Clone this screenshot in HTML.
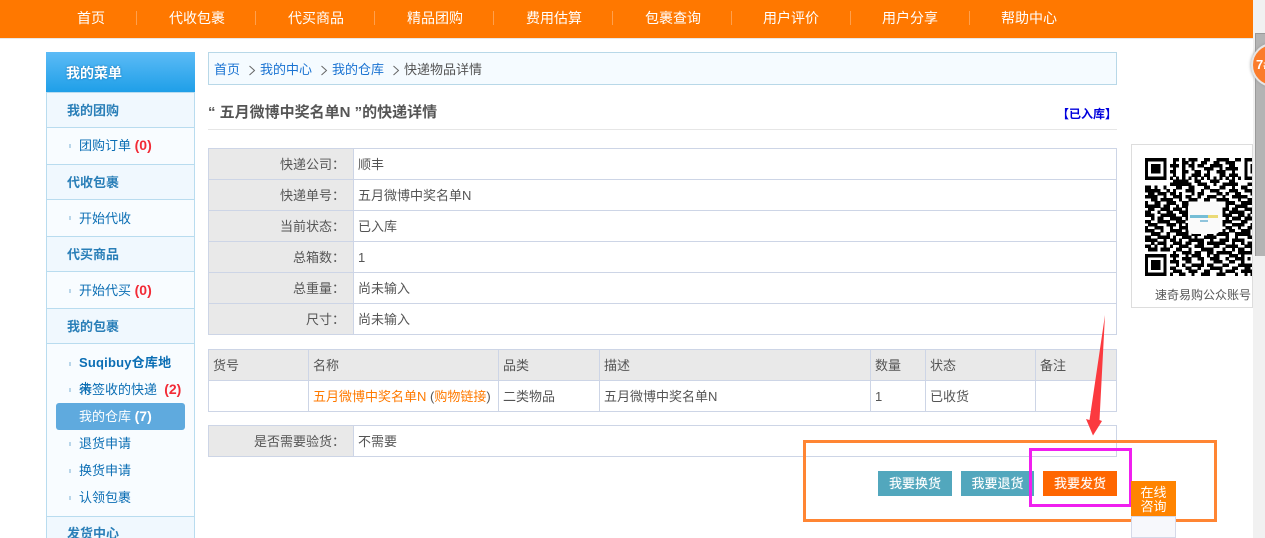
<!DOCTYPE html>
<html lang="zh-CN"><head><meta charset="utf-8"><title>快递物品详情</title>
<style>
*{box-sizing:border-box}
html,body{margin:0;padding:0;width:1265px;height:538px;overflow:hidden}
#w{position:absolute;left:0;top:0;width:1265px;height:538px;overflow:hidden;background:#fff;font:13px/16px "WenQuanYi Zen Hei Sharp","WenQuanYi Zen Hei","Liberation Sans","Noto Sans CJK SC",sans-serif;color:#555}
.a,.a *{white-space:nowrap}
.a{position:absolute}
a{text-decoration:none}
#hd{left:0;top:0;width:1253px;height:39px;background:#ff7800;border-bottom:1px solid #e8e8e8}
.n{position:absolute;top:10px;color:#fff;font-size:14px;line-height:16px}
.s{position:absolute;top:11px;width:1px;height:14px;background:#ffa04d}
#sb{left:46px;top:52px;width:149px;height:486px;overflow:hidden;background:#f8fcff;border-left:1px solid #b9dcef;border-right:1px solid #b9dcef}
#sh{left:46px;top:52px;width:149px;height:40px;background:linear-gradient(#5cbbf6,#1f9fe8);color:#fff;font-weight:bold;font-size:14px;line-height:42px;padding-left:20px;text-shadow:0 0 2px #0d6fb0}
.t{position:absolute;left:0;width:147px;height:36px;background:#f0f8fe;border-bottom:1px solid #b9dcef;border-top:1px solid #b9dcef;color:#2a7fb8;font-weight:bold;font-size:13px;line-height:36px;padding-left:20px}
.i{position:absolute;left:32px;color:#0b6eb4;font-size:13px;line-height:16px}
.i b{color:#f22b36;font-size:14px;font-family:"Liberation Sans",sans-serif}
.d{position:absolute;left:22px;width:2px;height:4px;background:#b9d6ea}
#cur{left:56px;top:403px;width:129px;height:27px;background:#5faade;border-radius:3px;color:#fff;line-height:27px;padding-left:23px}
#cur b{font-family:"Liberation Sans",sans-serif;font-size:14px}
#bc{left:208px;top:52px;width:909px;height:33px;background:#f5fbff;border:1px solid #b8d8e8}
#bc span{position:absolute;top:9px;color:#1a73d2}
#bc svg{position:absolute;top:12px;left:0}
#ti{left:208px;top:105px;font-weight:bold;font-size:15px;color:#555}
#st{right:148px;top:106px;color:#00d;font-weight:bold;font-size:12px}
#ln{left:208px;top:129px;width:909px;height:1px;background:#e6e6e6}
table{position:absolute;border-collapse:collapse;table-layout:fixed;left:208px;width:909px}
td{border:1px solid #cdd5e6;height:31px;padding:1px 4px 0;font-size:13px;color:#555;white-space:nowrap;line-height:16px}
td.l{background:#e9e9e9;text-align:right;padding-right:8px}
.h td{background:#e9e9e9}
.o{color:#ff7a00}
.b{position:absolute;top:471px;height:25px;color:#fff;text-align:center;line-height:25px;font-size:13px;background:#52a7bd;text-shadow:0 0 1px rgba(255,255,255,.5)}
</style></head><body><div id="w">
<div class="a" id="hd">
<span class="n" style="left:77px">首页</span><i class="s" style="left:136px"></i>
<span class="n" style="left:169px">代收包裹</span><i class="s" style="left:255px"></i>
<span class="n" style="left:288px">代买商品</span><i class="s" style="left:374px"></i>
<span class="n" style="left:407px">精品团购</span><i class="s" style="left:493px"></i>
<span class="n" style="left:526px">费用估算</span><i class="s" style="left:612px"></i>
<span class="n" style="left:645px">包裹查询</span><i class="s" style="left:731px"></i>
<span class="n" style="left:763px">用户评价</span><i class="s" style="left:850px"></i>
<span class="n" style="left:882px">用户分享</span><i class="s" style="left:969px"></i>
<span class="n" style="left:1001px">帮助中心</span>
</div>

<div class="a" id="sb">
<div class="t" style="top:40px;height:36px">我的团购</div>
<i class="d" style="top:92px"></i><span class="i" style="top:85px">团购订单 <b>(0)</b></span>
<div class="t" style="top:112px">代收包裹</div>
<i class="d" style="top:164px"></i><span class="i" style="top:159px">开始代收</span>
<div class="t" style="top:184px">代买商品</div>
<i class="d" style="top:237px"></i><span class="i" style="top:230px">开始代买 <b>(0)</b></span>
<div class="t" style="top:256px">我的包裹</div>
<i class="d" style="top:310px"></i><span class="i" style="top:303px;font-weight:bold;letter-spacing:.2px">Suqibuy仓库地</span>
<i class="d" style="top:336px"></i><span class="i" style="top:329px"><span style="position:absolute;left:0;top:0">未</span>待签收的快递 &nbsp;<b>(2)</b></span>
<i class="d" style="top:390px"></i><span class="i" style="top:384px">退货申请</span>
<i class="d" style="top:417px"></i><span class="i" style="top:411px">换货申请</span>
<i class="d" style="top:444px"></i><span class="i" style="top:438px">认领包裹</span>
<div class="t" style="top:464px;line-height:34px">发货中心</div>
</div>
<div class="a" id="sh">我的菜单</div>
<div class="a" id="cur">我的仓库 <b>(7)</b></div>

<div class="a" id="bc">
<svg width="907" height="12" fill="none" stroke="#666"><path d="M40.500 1l5 4.500-5 4.500M112.500 1l5 4.500-5 4.500M184.500 1l5 4.500-5 4.500"/></svg>
<span style="left:5px">首页</span><span style="left:51px">我的中心</span><span style="left:123px">我的仓库</span><span style="left:195px;color:#555">快递物品详情</span></div>
<div class="a" id="ti">“ 五月微博中奖名单N ”的快递详情</div>
<div class="a" id="st">【已入库】</div>
<div class="a" id="ln"></div>

<table style="top:148px">
<col style="width:145px"><col>
<tr><td class="l">快递公司：</td><td>顺丰</td></tr>
<tr><td class="l">快递单号：</td><td>五月微博中奖名单N</td></tr>
<tr><td class="l">当前状态：</td><td>已入库</td></tr>
<tr><td class="l">总箱数：</td><td>1</td></tr>
<tr><td class="l">总重量：</td><td>尚未输入</td></tr>
<tr><td class="l">尺寸：</td><td>尚未输入</td></tr>
</table>

<table style="top:349px">
<col style="width:100px"><col style="width:190px"><col style="width:101px"><col style="width:271px"><col style="width:55px"><col style="width:110px"><col>
<tr class="h"><td>货号</td><td>名称</td><td>品类</td><td>描述</td><td>数量</td><td>状态</td><td>备注</td></tr>
<tr><td></td><td><span class="o">五月微博中奖名单N</span> (<span class="o">购物链接</span>)</td><td>二类物品</td><td>五月微博中奖名单N</td><td>1</td><td>已收货</td><td></td></tr>
</table>

<table style="top:425px">
<col style="width:145px"><col>
<tr><td class="l">是否需要验货：</td><td>不需要</td></tr>
</table>

<div class="b" style="left:878px;width:74px">我要换货</div>
<div class="b" style="left:961px;width:73px">我要退货</div>
<div class="b" style="left:1043px;width:74px;background:#ff6600">我要发货</div>

<div class="a" style="left:803px;top:440px;width:414px;height:82px;border:3px solid #ff8533"></div>
<div class="a" style="left:1029px;top:448px;width:103px;height:59px;border:3px solid #f01fef"></div>

<svg class="a" style="left:1080px;top:310px" width="40" height="130"><path d="M25 5 L19.500 110 L22 111 L13 125.500 L6 109 L9.500 110 Z" fill="#fb3a3f"/></svg>

<div class="a" style="left:1131px;top:481px;width:45px;height:35px;background:#ff8400;color:#fff;font-size:13px;line-height:14px;text-align:center;padding-top:5px;white-space:normal">在线<br>咨询</div>
<div class="a" style="left:1131px;top:516px;width:45px;height:22px;border:1px solid #d5d9e8;background:#f7f8fc"></div>

<div class="a" style="left:1131px;top:144px;width:122px;height:164px;border:1px solid #ddd;overflow:hidden">
<svg style="position:absolute;left:13px;top:13px;filter:blur(.35px)" width="121" height="121" viewBox="0 0 39 39" shape-rendering="crispEdges"><path stroke="#000" stroke-width="1.150" fill="none" d="
M0 .5h7M9 .5h2M12 .5h1M14 .5h3M19 .5h2M23 .5h4M29 .5h2M32 .5h7
M0 1.500h1M6 1.500h1M9 1.500h1M12 1.500h2M15 1.500h1M18 1.500h2M22 1.500h2M26 1.500h3M32 1.500h1M38 1.500h1
M0 2.500h1M2 2.500h3M6 2.500h1M8 2.500h3M12 2.500h1M14 2.500h2M17 2.500h2M21 2.500h4M27 2.500h2M32 2.500h1M34 2.500h3
M0 3.500h1M2 3.500h3M6 3.500h1M9 3.500h1M12 3.500h1M15 3.500h1M19 3.500h3M24 3.500h1M26 3.500h4M32 3.500h1M34 3.500h3
M0 4.500h1M2 4.500h3M6 4.500h1M8 4.500h2M12 4.500h2M16 4.500h2M20 4.500h1M23 4.500h3M28 4.500h1M32 4.500h1M34 4.500h3
M0 5.500h1M6 5.500h1M9 5.500h1M12 5.500h1M15 5.500h3M19 5.500h2M24 5.500h2M27 5.500h3M32 5.500h1
M0 6.500h7M8 6.500h1M10 6.500h1M12 6.500h1M14 6.500h1M16 6.500h1M18 6.500h1M20 6.500h1M22 6.500h1M24 6.500h1M26 6.500h1M28 6.500h1M30 6.500h1M32 6.500h7
M9 7.500h5M16 7.500h2M21 7.500h3M27 7.500h2
M8 8.500h7M17 8.500h3M22 8.500h1M25 8.500h5M33 8.500h3
M0 9.500h2M3 9.500h1M6 9.500h1M10 9.500h2M14 9.500h2M19 9.500h2M24 9.500h2M28 9.500h1M31 9.500h2M35 9.500h3
M0 10.500h5M7 10.500h1M9 10.500h1M13 10.500h3M18 10.500h1M21 10.500h3M27 10.500h3M32 10.500h4
M1 11.500h2M4 11.500h3M8 11.500h2M11 11.500h1M15 11.500h1M17 11.500h2M23 11.500h2M26 11.500h1M29 11.500h2M34 11.500h2M37 11.500h2
M0 12.500h4M6 12.500h1M9 12.500h3M13 12.500h2M17 12.500h1M20 12.500h3M25 12.500h1M28 12.500h5M35 12.500h2
M2 13.500h2M5 13.500h4M11 13.500h1M14 13.500h3M19 13.500h2M23 13.500h4M30 13.500h1M33 13.500h4
M0 14.500h1M3 14.500h2M7 14.500h3M12 14.500h2M26 14.500h3M31 14.500h5M37 14.500h2
M0 15.500h5M6 15.500h2M10 15.500h1M12 15.500h2M26 15.500h1M29 15.500h4M36 15.500h3
M1 16.500h2M5 16.500h3M9 16.500h3M13 16.500h1M25 16.500h2M28 16.500h2M32 16.500h3M37 16.500h2
M0 17.500h2M4 17.500h1M7 17.500h2M11 17.500h3M25 17.500h1M27 17.500h5M34 17.500h2
M0 18.500h3M5 18.500h5M12 18.500h2M25 18.500h3M30 18.500h2M33 18.500h1M36 18.500h3
M2 19.500h1M4 19.500h2M8 19.500h4M13 19.500h1M26 19.500h1M28 19.500h3M32 19.500h4M37 19.500h1
M0 20.500h2M4 20.500h4M10 20.500h3M25 20.500h3M31 20.500h2M35 20.500h1M37 20.500h2
M1 21.500h3M7 21.500h3M11 21.500h1M13 21.500h1M25 21.500h1M28 21.500h4M34 21.500h3
M0 22.500h1M3 22.500h3M8 22.500h1M11 22.500h3M26 22.500h2M30 22.500h1M33 22.500h2M36 22.500h3
M0 23.500h3M5 23.500h1M8 23.500h4M13 23.500h1M25 23.500h1M27 23.500h2M31 23.500h3M37 23.500h1
M2 24.500h3M7 24.500h1M10 24.500h4M15 24.500h3M20 24.500h2M23 24.500h4M29 24.500h5M35 24.500h4
M0 25.500h2M4 25.500h4M9 25.500h1M12 25.500h3M16 25.500h1M19 25.500h4M26 25.500h1M29 25.500h1M33 25.500h3
M0 26.500h4M6 26.500h1M8 26.500h2M11 26.500h1M14 26.500h5M21 26.500h1M24 26.500h3M28 26.500h4M35 26.500h2M38 26.500h1
M2 27.500h1M4 27.500h3M9 27.500h3M13 27.500h2M17 27.500h2M20 27.500h6M28 27.500h1M31 27.500h1M33 27.500h4
M0 28.500h2M3 28.500h1M6 28.500h1M8 28.500h1M11 28.500h3M16 28.500h3M22 28.500h2M26 28.500h4M32 28.500h4M37 28.500h2
M1 29.500h3M5 29.500h3M10 29.500h2M14 29.500h1M18 29.500h4M25 29.500h1M28 29.500h1M30 29.500h2M34 29.500h1M36 29.500h2
M9 30.500h1M12 30.500h3M16 30.500h2M20 30.500h2M23 30.500h5M30 30.500h8
M0 31.500h7M8 31.500h3M13 31.500h1M15 31.500h3M20 31.500h1M22 31.500h2M27 31.500h3M31 31.500h1M35 31.500h1M37 31.500h1
M0 32.500h1M6 32.500h1M9 32.500h1M12 32.500h3M17 32.500h2M21 32.500h3M26 32.500h1M29 32.500h3M33 32.500h1M35 32.500h1M37 32.500h2
M0 33.500h1M2 33.500h3M6 33.500h1M8 33.500h3M13 33.500h2M18 33.500h1M22 33.500h3M27 33.500h2M31 33.500h1M35 33.500h1
M0 34.500h1M2 34.500h3M6 34.500h1M10 34.500h1M12 34.500h1M15 34.500h4M20 34.500h2M25 34.500h2M30 34.500h6M37 34.500h2
M0 35.500h1M2 35.500h3M6 35.500h1M8 35.500h2M13 35.500h2M17 35.500h1M21 35.500h4M28 35.500h2M32 35.500h2M36 35.500h1
M0 36.500h1M6 36.500h1M9 36.500h3M14 36.500h3M19 36.500h2M24 36.500h1M26 36.500h3M31 36.500h4M37 36.500h2
M0 37.500h7M8 37.500h1M11 37.500h2M15 37.500h1M18 37.500h3M23 37.500h3M29 37.500h1M32 37.500h1M34 37.500h3
"/></svg>
<div style="position:absolute;left:56px;top:57px;width:32px;height:32px;background:#fafafa;border-radius:5px"></div>
<div style="position:absolute;left:58px;top:70px;width:28px;height:3px;background:linear-gradient(90deg,#5fb4cf 65%,#e8d45f 65%);opacity:.85"></div>
<div style="position:absolute;left:68px;top:75px;width:8px;height:2px;background:#8fc4dc"></div>
<div style="position:absolute;left:23px;top:143px;font-size:12px;line-height:14px;color:#555">速奇易购公众账号</div>
</div>

<div class="a" style="left:1253px;top:0;width:12px;height:538px;background:#f1f1f1"></div>
<div class="a" style="left:1255px;top:33px;width:10px;height:223px;background:#b4b4b4;border-left:1px solid #9a9a9a;border-top:1px solid #9a9a9a"></div>
<div class="a" style="left:1251px;top:43px;width:44px;height:44px;border-radius:50%;background:#fb7c2b;border:2px solid #e6e6e6;box-shadow:0 0 3px #999;color:#fff;font:bold 13px/40px 'Liberation Sans',sans-serif;padding-left:3px">7#</div>
</div></body></html>
